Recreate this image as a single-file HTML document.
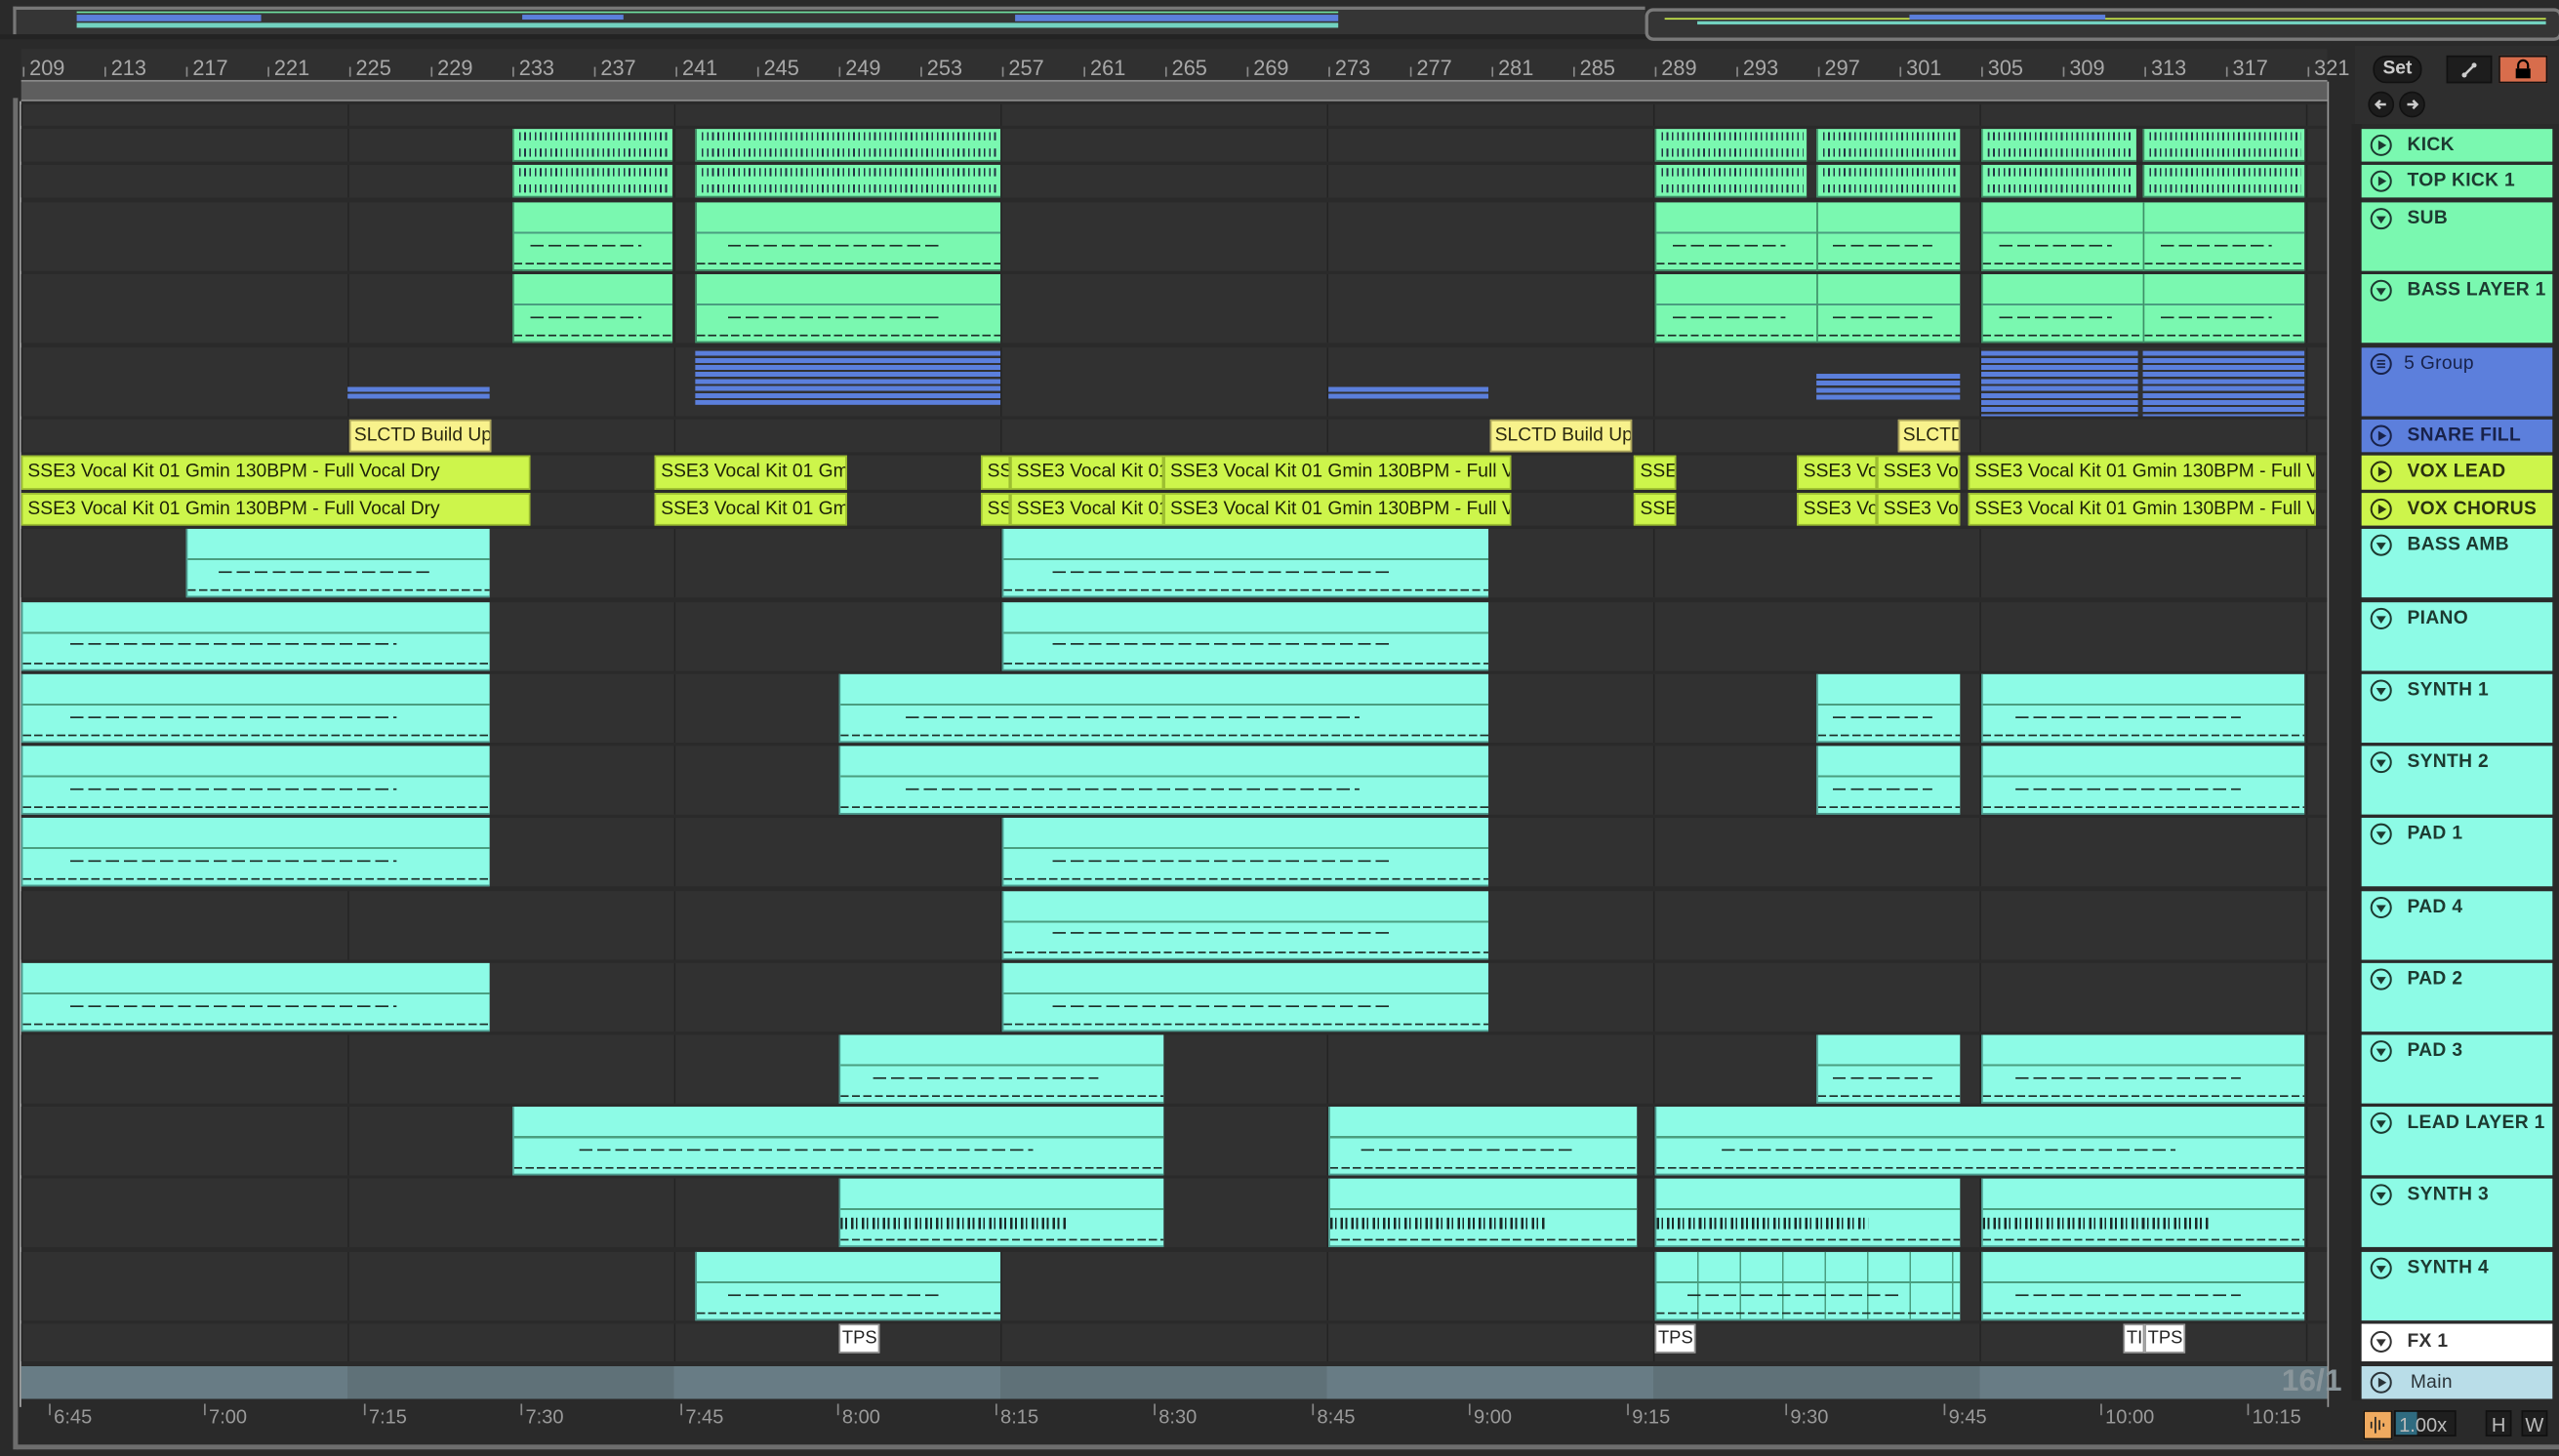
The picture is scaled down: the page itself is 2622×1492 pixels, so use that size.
<!DOCTYPE html>
<html><head><meta charset="utf-8"><style>
*{margin:0;padding:0}
body{width:2622px;height:1492px;overflow:hidden;background:#2a2a2a;font-family:"Liberation Sans",sans-serif}
#s{position:absolute;left:0;top:0;width:1568px;height:892px;transform:scale(1.67219,1.67265);transform-origin:0 0;background:#2a2a2a}
.a{position:absolute}
.row{position:absolute;left:13px;width:1413px;background:linear-gradient(90deg,#232323 0 1px,#313131 1px) 0 0/200px 100% repeat-x,#313131}
.c{position:absolute;top:0;bottom:0;box-sizing:border-box;overflow:hidden}
.g{background:#7af8b0;border-left:1px solid #3f8f67;border-bottom:1px solid #3f8f67}
.t{background:#8dfbe6;border-left:1px solid #4b9a8e;border-bottom:1px solid #4b9a8e}
.k::before,.k::after{content:"";position:absolute;left:3px;right:2px;height:5px;background:repeating-linear-gradient(90deg,#234 0 1px,transparent 1px 3.2px)}
.k::before{top:2px}.k::after{bottom:2px}
.m{background-image:linear-gradient(transparent 44%,#4a9e80 44%,#4a9e80 47%,transparent 47%)}
.m::before{content:"";position:absolute;left:10%;width:70%;top:63%;height:1px;background:repeating-linear-gradient(90deg,#1d2d28 0 8px,transparent 8px 11px)}
.m::after{content:"";position:absolute;left:0;right:0;bottom:3px;height:1px;background:repeating-linear-gradient(90deg,#1d2d28 0 5px,transparent 5px 7px)}
.bc::before{content:"";position:absolute;left:0;right:0;top:57%;height:7px;background:repeating-linear-gradient(90deg,#1a2a28 0 1.5px,transparent 1.5px 3px,#1a2a28 3px 4px,transparent 4px 6.5px)}
.bl{position:absolute;background:repeating-linear-gradient(#5b7fdc 0 3px,transparent 3px 4.3px)}
.v{background:#cdf54b;border:1px solid #9cbd30;font-size:11.5px;line-height:18px;padding-left:3px;color:#1d2208;white-space:nowrap}
.y{background:#f8f28c;border:1px solid #a9a15a;font-size:11.5px;line-height:18px;padding-left:2px;color:#2a2810;white-space:nowrap}
.w{background:#fff;border:1px solid #999;font-size:11px;line-height:17px;padding-left:1px;color:#222;white-space:nowrap;height:18px}
.h{position:absolute;left:1447px;width:117px;font-weight:bold;font-size:11.5px;color:#1c3a30;box-sizing:border-box;padding-left:28px;letter-spacing:.2px}
.h svg{position:absolute;left:5px;top:3px}
.rl{position:absolute;top:34px;font-size:13px;color:#a8a8a8}
.rl::before{content:"";position:absolute;left:-4px;top:7px;width:1px;height:6px;background:#888}
.tl{position:absolute;top:861px;font-size:12px;color:#9a9a9a}
.tl::before{content:"";position:absolute;left:-3px;top:-1px;width:1px;height:7px;background:#888}
</style></head><body><div id="s">
<svg width="0" height="0" style="position:absolute"><defs>
<symbol id="p" viewBox="0 0 14 14"><circle cx="7" cy="7" r="6" fill="none" stroke="currentColor" stroke-width="1.2"/><path d="M5.3 4v6l5-3z" fill="currentColor"/></symbol>
<symbol id="d" viewBox="0 0 14 14"><circle cx="7" cy="7" r="6" fill="none" stroke="currentColor" stroke-width="1.2"/><path d="M4 5.5h6l-3 4.5z" fill="currentColor"/></symbol>
<symbol id="l" viewBox="0 0 14 14"><circle cx="7" cy="7" r="6" fill="none" stroke="currentColor" stroke-width="1.2"/><path d="M4.5 5h5M4.5 7h5M4.5 9h5" stroke="currentColor" stroke-width="1"/></symbol>
</defs></svg>

<!-- overview -->
<div class="a" style="left:8px;top:4px;width:1000px;height:2px;background:#777"></div>
<div class="a" style="left:8px;top:4px;width:2px;height:18px;background:#777"></div>
<div class="a" style="left:10px;top:6px;width:998px;height:15px;background:#353535"></div>
<div class="a" style="left:0;top:21px;width:1568px;height:3px;background:#232323"></div>
<div class="a" style="left:1008px;top:5px;width:558px;height:16px;border:2px solid #7a7a7a;border-radius:5px;background:#353535"></div>
<div class="a" style="left:47px;top:9px;width:113px;height:4px;background:#5b7fdc"></div>
<div class="a" style="left:47px;top:14px;width:773px;height:3px;background:#72d2c0"></div>
<div class="a" style="left:320px;top:9px;width:62px;height:3px;background:#5b7fdc"></div>
<div class="a" style="left:622px;top:9px;width:198px;height:4px;background:#5b7fdc"></div>
<div class="a" style="left:47px;top:7px;width:773px;height:1px;background:#6fe0a0"></div>
<div class="a" style="left:1020px;top:11px;width:540px;height:1px;background:#c8e84a"></div>
<div class="a" style="left:1040px;top:13px;width:520px;height:2px;background:#72d2c0"></div>
<div class="a" style="left:1170px;top:9px;width:120px;height:3px;background:#5b7fdc"></div>

<!-- ruler -->
<div class="a" style="left:13px;top:30px;width:1413px;height:20px;background:#303030"></div>
<div class="rl" style="left:18px">209</div><div class="rl" style="left:68px">213</div><div class="rl" style="left:118px">217</div><div class="rl" style="left:168px">221</div><div class="rl" style="left:218px">225</div><div class="rl" style="left:268px">229</div><div class="rl" style="left:318px">233</div><div class="rl" style="left:368px">237</div><div class="rl" style="left:418px">241</div><div class="rl" style="left:468px">245</div><div class="rl" style="left:518px">249</div><div class="rl" style="left:568px">253</div><div class="rl" style="left:618px">257</div><div class="rl" style="left:668px">261</div><div class="rl" style="left:718px">265</div><div class="rl" style="left:768px">269</div><div class="rl" style="left:818px">273</div><div class="rl" style="left:868px">277</div><div class="rl" style="left:918px">281</div><div class="rl" style="left:968px">285</div><div class="rl" style="left:1018px">289</div><div class="rl" style="left:1068px">293</div><div class="rl" style="left:1118px">297</div><div class="rl" style="left:1168px">301</div><div class="rl" style="left:1218px">305</div><div class="rl" style="left:1268px">309</div><div class="rl" style="left:1318px">313</div><div class="rl" style="left:1368px">317</div><div class="rl" style="left:1418px">321</div>
<div class="a" style="left:13px;top:49px;width:1413px;height:13px;background:#5e5e5e;border-top:1px solid #8a8a8a;border-bottom:1px solid #8a8a8a;box-sizing:border-box"></div>
<div class="a" style="left:12px;top:62px;width:1px;height:800px;background:#aaa"></div>

<!-- lanes -->
<div class="row" style="top:64px;height:13px"></div>
<div class="row" style="top:79px;height:20px">
<div class="c g k" style="left:301px;width:98px"></div><div class="c g k" style="left:413px;width:187px"></div><div class="c g k" style="left:1001px;width:93px"></div><div class="c g k" style="left:1100px;width:88px"></div><div class="c g k" style="left:1201px;width:95px"></div><div class="c g k" style="left:1300px;width:99px"></div></div>
<div class="row" style="top:101px;height:20px">
<div class="c g k" style="left:301px;width:98px"></div><div class="c g k" style="left:413px;width:187px"></div><div class="c g k" style="left:1001px;width:93px"></div><div class="c g k" style="left:1100px;width:88px"></div><div class="c g k" style="left:1201px;width:95px"></div><div class="c g k" style="left:1300px;width:99px"></div></div>
<div class="row" style="top:124px;height:42px">
<div class="c g m" style="left:301px;width:98px"></div><div class="c g m" style="left:413px;width:187px"></div><div class="c g m" style="left:1001px;width:100px"></div><div class="c g m" style="left:1100px;width:88px"></div><div class="c g m" style="left:1201px;width:100px"></div><div class="c g m" style="left:1300px;width:99px"></div></div>
<div class="row" style="top:168px;height:42px">
<div class="c g m" style="left:301px;width:98px"></div><div class="c g m" style="left:413px;width:187px"></div><div class="c g m" style="left:1001px;width:100px"></div><div class="c g m" style="left:1100px;width:88px"></div><div class="c g m" style="left:1201px;width:100px"></div><div class="c g m" style="left:1300px;width:99px"></div></div>
<div class="row" style="top:212.5px;height:42px">
<div class="bl" style="left:200px;width:87px;top:24px;height:8px"></div>
<div class="bl" style="left:413px;width:187px;top:2px;height:33px"></div>
<div class="bl" style="left:801px;width:98px;top:24px;height:8px"></div>
<div class="bl" style="left:1100px;width:88px;top:16px;height:16px"></div>
<div class="bl" style="left:1201px;width:96px;top:2px;height:40px"></div>
<div class="bl" style="left:1300px;width:99px;top:2px;height:40px"></div></div>
<div class="row" style="top:256.5px;height:20.5px">
<div class="c y" style="left:201px;width:87px">SLCTD Build Up</div><div class="c y" style="left:900px;width:87px">SLCTD Build Up</div><div class="c y" style="left:1150px;width:38px">SLCTD</div></div>
<div class="row" style="top:279px;height:20.5px">
<div class="c v" style="left:0;width:312px">SSE3 Vocal Kit 01 Gmin 130BPM - Full Vocal Dry</div><div class="c v" style="left:388px;width:118px">SSE3 Vocal Kit 01 Gmin</div><div class="c v" style="left:588px;width:18px">SSE3</div><div class="c v" style="left:606px;width:94px">SSE3 Vocal Kit 01 Gmin</div><div class="c v" style="left:700px;width:213px">SSE3 Vocal Kit 01 Gmin 130BPM - Full Vocal</div><div class="c v" style="left:988px;width:26px">SSE3</div><div class="c v" style="left:1088px;width:49px">SSE3 Vocal</div><div class="c v" style="left:1137px;width:51px">SSE3 Vocal</div><div class="c v" style="left:1193px;width:213px">SSE3 Vocal Kit 01 Gmin 130BPM - Full Vocal</div></div>
<div class="row" style="top:301.5px;height:20.5px">
<div class="c v" style="left:0;width:312px">SSE3 Vocal Kit 01 Gmin 130BPM - Full Vocal Dry</div><div class="c v" style="left:388px;width:118px">SSE3 Vocal Kit 01 Gmin</div><div class="c v" style="left:588px;width:18px">SSE3</div><div class="c v" style="left:606px;width:94px">SSE3 Vocal Kit 01 Gmin</div><div class="c v" style="left:700px;width:213px">SSE3 Vocal Kit 01 Gmin 130BPM - Full Vocal</div><div class="c v" style="left:988px;width:26px">SSE3</div><div class="c v" style="left:1088px;width:49px">SSE3 Vocal</div><div class="c v" style="left:1137px;width:51px">SSE3 Vocal</div><div class="c v" style="left:1193px;width:213px">SSE3 Vocal Kit 01 Gmin 130BPM - Full Vocal</div></div>
<div class="row" style="top:324px;height:42px"><div class="c t m" style="left:101px;width:186px"></div><div class="c t m" style="left:601px;width:298px"></div></div>
<div class="row" style="top:368.5px;height:42px"><div class="c t m" style="left:0;width:287px"></div><div class="c t m" style="left:601px;width:298px"></div></div>
<div class="row" style="top:412.7px;height:42px"><div class="c t m" style="left:0;width:287px"></div><div class="c t m" style="left:501px;width:398px"></div><div class="c t m" style="left:1100px;width:88px"></div><div class="c t m" style="left:1201px;width:198px"></div></div>
<div class="row" style="top:457px;height:42px"><div class="c t m" style="left:0;width:287px"></div><div class="c t m" style="left:501px;width:398px"></div><div class="c t m" style="left:1100px;width:88px"></div><div class="c t m" style="left:1201px;width:198px"></div></div>
<div class="row" style="top:501px;height:42px"><div class="c t m" style="left:0;width:287px"></div><div class="c t m" style="left:601px;width:298px"></div></div>
<div class="row" style="top:545.5px;height:42px"><div class="c t m" style="left:601px;width:298px"></div></div>
<div class="row" style="top:589.7px;height:42px"><div class="c t m" style="left:0;width:287px"></div><div class="c t m" style="left:601px;width:298px"></div></div>
<div class="row" style="top:634px;height:42px"><div class="c t m" style="left:501px;width:199px"></div><div class="c t m" style="left:1100px;width:88px"></div><div class="c t m" style="left:1201px;width:198px"></div></div>
<div class="row" style="top:678px;height:42px"><div class="c t m" style="left:301px;width:399px"></div><div class="c t m" style="left:801px;width:189px"></div><div class="c t m" style="left:1001px;width:398px"></div></div>
<div class="row" style="top:722.4px;height:42px"><div class="c t m bc" style="left:501px;width:199px"></div><div class="c t m bc" style="left:801px;width:189px"></div><div class="c t m bc" style="left:1001px;width:187px"></div><div class="c t m bc" style="left:1201px;width:198px"></div></div>
<div class="row" style="top:766.7px;height:42px"><div class="c t m" style="left:413px;width:187px"></div><div class="c t m" style="left:1001px;width:187px;background-image:linear-gradient(transparent 44%,#4a9e80 44%,#4a9e80 47%,transparent 47%),repeating-linear-gradient(90deg,transparent 0 25px,#4a9e80 25px 26px)"></div><div class="c t m" style="left:1201px;width:198px"></div></div>
<div class="row" style="top:811px;height:23px"><div class="c w" style="left:501px;width:25px">TPS</div><div class="c w" style="left:1001px;width:25px">TPS</div><div class="c w" style="left:1288px;width:13px">TI</div><div class="c w" style="left:1301px;width:25px">TPS</div></div>
<div class="row" style="top:837px;height:20px;background:linear-gradient(90deg,#687c85 0 200px,#5f7178 200px 400px,#687c85 400px 600px,#5f7178 600px 800px,#687c85 800px 1000px,#5f7178 1000px 1200px,#687c85 1200px)"></div>
<div class="a" style="left:1426px;top:50px;width:1px;height:812px;background:#999"></div>
<div class="a" style="left:1398px;top:836px;font-size:19px;font-weight:bold;color:#8a969b">16/1</div>

<!-- time ruler -->
<div class="tl" style="left:33px">6:45</div><div class="tl" style="left:128px">7:00</div><div class="tl" style="left:226px">7:15</div><div class="tl" style="left:322px">7:30</div><div class="tl" style="left:420px">7:45</div><div class="tl" style="left:516px">8:00</div><div class="tl" style="left:613px">8:15</div><div class="tl" style="left:710px">8:30</div><div class="tl" style="left:807px">8:45</div><div class="tl" style="left:903px">9:00</div><div class="tl" style="left:1000px">9:15</div><div class="tl" style="left:1097px">9:30</div><div class="tl" style="left:1194px">9:45</div><div class="tl" style="left:1290px">10:00</div><div class="tl" style="left:1380px">10:15</div>
<div class="a" style="left:8px;top:60px;width:3px;height:828px;background:#6d6d6d;border-radius:0 0 0 4px"></div>
<div class="a" style="left:8px;top:885px;width:1560px;height:3px;background:#6d6d6d"></div>

<!-- header controls -->
<div class="a" style="left:1443px;top:28px;width:125px;height:48px;background:#2e2e2e"></div>
<div class="a" style="left:1454px;top:34px;width:28px;height:15px;border-radius:8px;background:#1c1c1c;border:1px solid #111;color:#ccc;font-size:11.5px;font-weight:bold;text-align:center;line-height:15px">Set</div>
<div class="a" style="left:1499px;top:34px;width:26px;height:15px;background:#1d1d1d;border:1px solid #111"><svg width="26" height="15"><path d="M10 11l6-6" stroke="#ccc" stroke-width="1.5"/><circle cx="10" cy="11" r="1.5" fill="#ccc"/><circle cx="16" cy="5" r="1.5" fill="#ccc"/></svg></div>
<div class="a" style="left:1531px;top:34px;width:28px;height:15px;background:#d86d4c;border:1px solid #111"><svg width="28" height="15"><path d="M11 7V5a3 3 0 0 1 6 0v2" fill="none" stroke="#000" stroke-width="1.3"/><rect x="9.5" y="7" width="9" height="6" fill="#000"/></svg></div>
<div class="a" style="left:1451px;top:56px;width:14px;height:14px;border-radius:50%;background:#1c1c1c;border:1px solid #111"><svg width="14" height="14"><path d="M10 7H4M6.5 4.5L4 7l2.5 2.5" fill="none" stroke="#ccc" stroke-width="1.5"/></svg></div>
<div class="a" style="left:1470px;top:56px;width:14px;height:14px;border-radius:50%;background:#1c1c1c;border:1px solid #111"><svg width="14" height="14"><path d="M4 7h6M7.5 4.5L10 7l-2.5 2.5" fill="none" stroke="#ccc" stroke-width="1.5"/></svg></div>
<div class="a" style="left:1441px;top:76px;width:6px;height:782px;background:#262626"></div>

<div class="h" style="top:79px;height:20px;line-height:20px;background:#7af8b0"><svg width="14" height="14"><use href="#p"/></svg>KICK</div>
<div class="h" style="top:101px;height:20px;line-height:20px;background:#7af8b0"><svg width="14" height="14"><use href="#p"/></svg>TOP KICK 1</div>
<div class="h" style="top:124px;height:42px;line-height:20px;background:#7af8b0"><svg width="14" height="14"><use href="#d"/></svg>SUB</div>
<div class="h" style="top:168px;height:42px;line-height:20px;background:#7af8b0"><svg width="14" height="14"><use href="#d"/></svg>BASS LAYER 1</div>
<div class="h" style="top:212.5px;height:42px;line-height:20px;background:#5c7fdc;color:#18224a;font-weight:normal;padding-left:26px"><svg width="14" height="14"><use href="#l"/></svg>5 Group</div>
<div class="h" style="top:256.5px;height:20.5px;line-height:20px;background:#5c7fdc;color:#18224a"><svg width="14" height="14"><use href="#p"/></svg>SNARE FILL</div>
<div class="h" style="top:279px;height:20.5px;line-height:20px;background:#cdf54b;color:#2a3210"><svg width="14" height="14"><use href="#p"/></svg>VOX LEAD</div>
<div class="h" style="top:301.5px;height:20.5px;line-height:20px;background:#cdf54b;color:#2a3210"><svg width="14" height="14"><use href="#p"/></svg>VOX CHORUS</div>
<div class="h" style="top:324px;height:42px;line-height:20px;background:#8dfbe6"><svg width="14" height="14"><use href="#d"/></svg>BASS AMB</div>
<div class="h" style="top:368.5px;height:42px;line-height:20px;background:#8dfbe6"><svg width="14" height="14"><use href="#d"/></svg>PIANO</div>
<div class="h" style="top:412.7px;height:42px;line-height:20px;background:#8dfbe6"><svg width="14" height="14"><use href="#d"/></svg>SYNTH 1</div>
<div class="h" style="top:457px;height:42px;line-height:20px;background:#8dfbe6"><svg width="14" height="14"><use href="#d"/></svg>SYNTH 2</div>
<div class="h" style="top:501px;height:42px;line-height:20px;background:#8dfbe6"><svg width="14" height="14"><use href="#d"/></svg>PAD 1</div>
<div class="h" style="top:545.5px;height:42px;line-height:20px;background:#8dfbe6"><svg width="14" height="14"><use href="#d"/></svg>PAD 4</div>
<div class="h" style="top:589.7px;height:42px;line-height:20px;background:#8dfbe6"><svg width="14" height="14"><use href="#d"/></svg>PAD 2</div>
<div class="h" style="top:634px;height:42px;line-height:20px;background:#8dfbe6"><svg width="14" height="14"><use href="#d"/></svg>PAD 3</div>
<div class="h" style="top:678px;height:42px;line-height:20px;background:#8dfbe6"><svg width="14" height="14"><use href="#d"/></svg>LEAD LAYER 1</div>
<div class="h" style="top:722.4px;height:42px;line-height:20px;background:#8dfbe6"><svg width="14" height="14"><use href="#d"/></svg>SYNTH 3</div>
<div class="h" style="top:766.7px;height:42px;line-height:20px;background:#8dfbe6"><svg width="14" height="14"><use href="#d"/></svg>SYNTH 4</div>
<div class="h" style="top:811px;height:23px;line-height:22px;background:#fff;color:#333"><svg width="14" height="14" style="top:4px"><use href="#d"/></svg>FX 1</div>
<div class="h" style="top:837px;height:20px;line-height:20px;background:#b9dde8;color:#2a3338;font-weight:normal;padding-left:30px"><svg width="14" height="14"><use href="#p"/></svg>Main</div>

<!-- bottom controls -->
<div class="a" style="left:1448px;top:864px;width:16px;height:16px;background:#f0aa5f;border:1px solid #111"><svg width="16" height="16"><path d="M4 6v4M6.5 3v10M9 5v6M11.5 7v2" stroke="#222" stroke-width="1"/></svg></div>
<div class="a" style="left:1467px;top:864px;width:38px;height:16px;background:#1e1e1e;border:1px solid #111;color:#bbb;font-size:12px;line-height:16px;padding-left:2px;box-sizing:border-box"><div class="a" style="left:0;top:0;width:13px;height:14px;background:#2f6b80"></div><span style="position:relative">1.00x</span></div>
<div class="a" style="left:1523px;top:864px;width:16px;height:16px;background:#1e1e1e;border:1px solid #111;color:#bbb;font-size:12px;line-height:16px;text-align:center;box-sizing:border-box">H</div>
<div class="a" style="left:1545px;top:864px;width:16px;height:16px;background:#1e1e1e;border:1px solid #111;color:#bbb;font-size:12px;line-height:16px;text-align:center;box-sizing:border-box">W</div>
</div></body></html>
